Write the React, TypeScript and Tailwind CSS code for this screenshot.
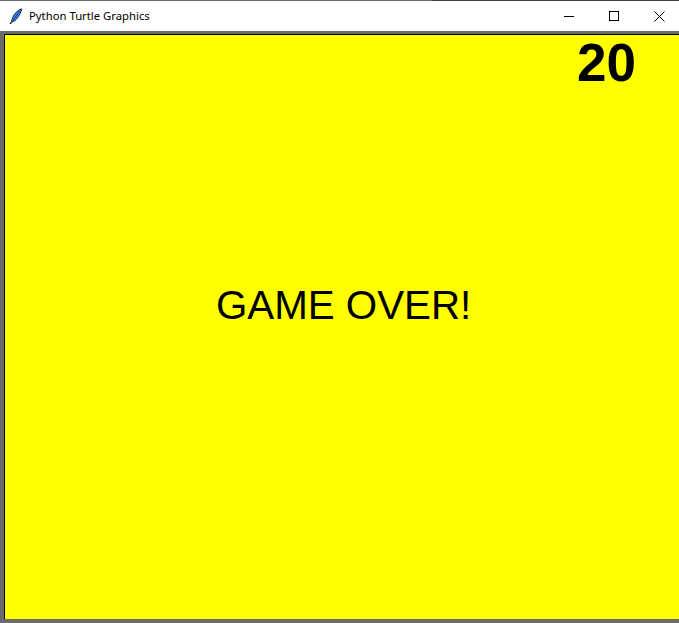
import React from "react";

export default function App() {
  return (
    <div className="w-[679px] h-[623px] flex flex-col overflow-hidden bg-white" style={{ fontFamily: '"Noto Sans", "Open Sans", sans-serif' }}>
      <div className="h-[1px] flex shrink-0">
        <div className="w-[432px] bg-[#6e6e6e]" />
        <div className="flex-1 bg-[#4b3a42]" />
      </div>
      <div className="h-[30px] shrink-0 flex items-center bg-white relative">
        <svg className="ml-[9px]" width="14" height="16" viewBox="0 0 14 16">
          <path d="M12.5 0.8 C9 2 5 5.5 3.5 10 L2.5 13.5 L1 15.5 L2 15.6 L3.3 13.8 C7 13 10 9 12.8 1.2 Z" fill="#3b82f6" stroke="#1a2a44" strokeWidth="1" />
          <path d="M11 3 L4 12.5" stroke="#1a2a44" strokeWidth="0.8" />
        </svg>
        <span className="ml-[6px] text-[11.3px] text-black leading-none" style={{ fontFamily: '"Noto Sans", sans-serif' }}>Python Turtle Graphics</span>
        <div className="ml-auto flex h-full">
          <div className="w-[40px] h-full flex items-center justify-center">
            <div className="w-[10px] h-[1px] bg-black" />
          </div>
          <div className="w-[50px] h-full flex items-center justify-center">
            <div className="w-[10px] h-[10px] border border-black" />
          </div>
          <div className="w-[40px] h-full flex items-center justify-center">
            <svg width="11" height="11" viewBox="0 0 11 11">
              <path d="M0.5 0.5 L10.5 10.5 M10.5 0.5 L0.5 10.5" stroke="#000" strokeWidth="1" />
            </svg>
          </div>
        </div>
      </div>
      <div className="flex-1 flex flex-col bg-[#6b6b6b] pl-[4px] pt-[3px] pb-[4px]">
        <div className="flex-1 border-l border-t border-black bg-[#ffff00] relative">
          <div className="absolute left-[211px] top-[251px] text-[40.3px] leading-none text-black" style={{ fontFamily: '"Liberation Sans", Arial, sans-serif' }}>GAME OVER!</div>
          <div className="absolute left-[572px] top-[1px] text-[53px] font-bold leading-none text-black" style={{ fontFamily: '"Liberation Sans", Arial, sans-serif' }}>20</div>
        </div>
      </div>
    </div>
  );
}
